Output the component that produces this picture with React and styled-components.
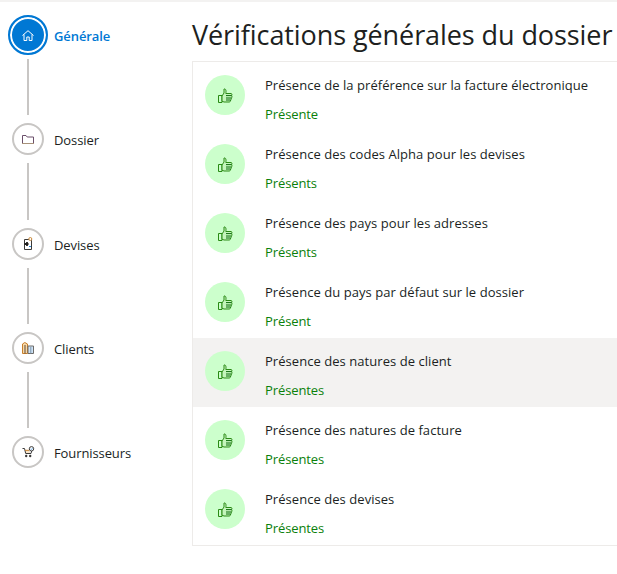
import React from "react"
import styled, { createGlobalStyle } from "styled-components"

const GlobalStyle = createGlobalStyle`
  html, body {
    margin: 0;
    padding: 0;
    background: #ffffff;
  }
  body {
    font-family: "Open Sans", "Noto Sans", sans-serif;
    overflow: hidden;
  }
`

const Page = styled.div`
  display: flex;
  width: 617px;
  height: 574px;
  overflow: hidden;
  border-top: 2px solid #f3f2f1;
  box-sizing: border-box;
`

const Sidebar = styled.nav`
  display: flex;
  flex-direction: column;
  flex: 0 0 192px;
  padding-top: 13px;
  box-sizing: border-box;
`

const Step = styled.div`
  display: flex;
  align-items: center;
  height: ${(p) => (p.$active ? "40px" : "32px")};
`

const NodeSlot = styled.div`
  display: flex;
  justify-content: center;
  width: 56px;
  flex: 0 0 56px;
`

const Node = styled.div`
  display: flex;
  align-items: center;
  justify-content: center;
  box-sizing: border-box;
  border-radius: 50%;
  width: 32px;
  height: 32px;
  background: #ffffff;
  border: 2px solid #c8c6c4;
`

const ActiveNode = styled(Node)`
  width: 40px;
  height: 40px;
  border: 2px solid #0078d4;
  background: #0078d4;
  box-shadow: inset 0 0 0 2px #ffffff;
`

const StepLabel = styled.span`
  font-size: 13px;
  letter-spacing: -0.1px;
  margin: 2px 0 0 -2px;
  color: ${(p) => (p.$active ? "#0078d4" : "#201f1e")};
  font-weight: ${(p) => (p.$active ? 600 : 400)};
`

const Connector = styled.div`
  width: 2px;
  height: 56.33px;
  margin: ${(p) => p.$top} 0 8px 27px;
  background: #c8c6c4;
`

const Main = styled.main`
  flex: 1;
  min-width: 0;
`

const Title = styled.h1`
  margin: 0;
  height: 59px;
  line-height: 66px;
  font-size: 27px;
  font-weight: 400;
  letter-spacing: -0.08px;
  color: #201f1e;
  white-space: nowrap;
`

const List = styled.ul`
  list-style: none;
  margin: 0;
  padding: 0;
  width: 470px;
  border: 1px solid #edebe9;
`

const Row = styled.li`
  display: flex;
  height: 69px;
  padding: 13px 0 0 12px;
  box-sizing: border-box;
  background: ${(p) => (p.$hover ? "#f3f2f1" : "#ffffff")};
`

const Badge = styled.div`
  display: flex;
  align-items: center;
  justify-content: center;
  width: 40px;
  height: 40px;
  border-radius: 50%;
  background: #ccffcc;
  flex: 0 0 40px;
`

const RowText = styled.div`
  display: flex;
  flex-direction: column;
  margin-left: 20px;
`

const RowTitle = styled.span`
  font-size: 13px;
  line-height: 20px;
  letter-spacing: 0.05px;
  color: #201f1e;
  white-space: nowrap;
`

const RowStatus = styled.span`
  font-size: 13px;
  line-height: 20px;
  margin-top: 9px;
  letter-spacing: -0.1px;
  color: #0a800a;
`

const HomeIcon = () => (
  <svg width="12" height="11" viewBox="0 0 12 11" fill="none" stroke="#fff" strokeWidth="1">
    <path d="M.5 5.5 6 .7 11.5 5.5M2 4.5V10.5H4.8V7H7.2V10.5H10V4.5" />
  </svg>
)

const FolderIcon = () => (
  <svg width="12" height="9" viewBox="0 0 12 9">
    <path d="M.5.5H4L5.2 2H11.5V8.5H.5Z" fill="#fff" stroke="#6b4f6b" />
    <path d="M0 8H12V9H0Z" fill="#a8927a" />
  </svg>
)

const CurrencyIcon = () => (
  <svg width="9" height="13" viewBox="0 0 9 13">
    <path d="M.5 2.5H7.5V12.5H.5Z" fill="#fff" stroke="#3b3a39" />
    <circle cx="6.3" cy="2" r="1.5" fill="#fff" stroke="#c98a3c" />
    <path d="M.5 7H4.5M3 5V9" stroke="#201f1e" strokeWidth="1.8" />
    <path d="M5 9.5H7" stroke="#2b88d8" />
  </svg>
)

const BuildingIcon = () => (
  <svg width="12" height="12" viewBox="0 0 12 12">
    <path d="M.5 11.5V2L2.8.5 5.5 2V11.5Z" fill="#f8d9a8" stroke="#c77f2c" />
    <path d="M6 11.5V4H11.5V11.5Z" fill="#cfe3f5" stroke="#6d6b69" />
    <path d="M3 3V11.5" stroke="#5c4a3a" />
    <path d="M8.8 5V11.5" stroke="#7a95ad" />
  </svg>
)

const CartIcon = () => (
  <svg width="13" height="12" viewBox="0 0 13 12" fill="none">
    <path d="M2.8 4H8V7.5H3.7Z" fill="#f6e3c8" />
    <path d="M.5 2.5H2.5L3.7 7.5H9L9.7 5" stroke="#3b3a39" />
    <path d="M3 4.3H7" stroke="#c77f2c" />
    <circle cx="9.5" cy="2.8" r="2.2" fill="#fff" stroke="#3b3a39" />
    <path d="M8.6 2.8 9.3 3.5 10.5 2.2" stroke="#2b88d8" strokeWidth=".8" />
    <circle cx="4.2" cy="10" r="1.2" fill="#3b3a39" />
    <circle cx="8.2" cy="10" r="1.2" fill="#3b3a39" />
  </svg>
)

const ThumbIcon = () => (
  <svg width="15" height="15" viewBox="0 0 15 15">
    <path d="M.5 7.5H4V14.5H.5Z" fill="#ccffcc" stroke="#2a8a14" />
    <path
      d="M4 8 6 5V1C8 .5 8.3 3 7.8 5.5H13C14 5.5 14.2 7 13.6 7.6 14.2 8.5 14 9.5 13.3 10 13.6 11 13.3 11.7 12.6 12 12.7 13.3 12 14 11 14H6L4 13.2Z"
      fill="#c4f5bc"
      stroke="#2a8a14"
    />
    <path d="M8 7.6H13.6M8 10H13.3M8 12H12.6" stroke="#0a6a0a" />
  </svg>
)

const steps = [
  { label: "Dossier", icon: <FolderIcon /> },
  { label: "Devises", icon: <CurrencyIcon /> },
  { label: "Clients", icon: <BuildingIcon /> },
  { label: "Fournisseurs", icon: <CartIcon /> },
]

const checks = [
  { title: "Présence de la préférence sur la facture électronique", status: "Présente" },
  { title: "Présence des codes Alpha pour les devises", status: "Présents" },
  { title: "Présence des pays pour les adresses", status: "Présents" },
  { title: "Présence du pays par défaut sur le dossier", status: "Présent" },
  { title: "Présence des natures de client", status: "Présentes", hover: true },
  { title: "Présence des natures de facture", status: "Présentes" },
  { title: "Présence des devises", status: "Présentes" },
]

export default function App() {
  return (
    <Page>
      <GlobalStyle />
      <Sidebar>
        <Step $active>
          <NodeSlot>
            <ActiveNode>
              <HomeIcon />
            </ActiveNode>
          </NodeSlot>
          <StepLabel $active>Générale</StepLabel>
        </Step>
        {steps.map((step, i) => (
          <React.Fragment key={step.label}>
            <Connector $top={i === 0 ? "4px" : "8px"} />
            <Step>
              <NodeSlot>
                <Node>{step.icon}</Node>
              </NodeSlot>
              <StepLabel>{step.label}</StepLabel>
            </Step>
          </React.Fragment>
        ))}
      </Sidebar>
      <Main>
        <Title>Vérifications générales du dossier</Title>
        <List>
          {checks.map((check) => (
            <Row key={check.title} $hover={check.hover}>
              <Badge>
                <ThumbIcon />
              </Badge>
              <RowText>
                <RowTitle>{check.title}</RowTitle>
                <RowStatus>{check.status}</RowStatus>
              </RowText>
            </Row>
          ))}
        </List>
      </Main>
    </Page>
  )
}
